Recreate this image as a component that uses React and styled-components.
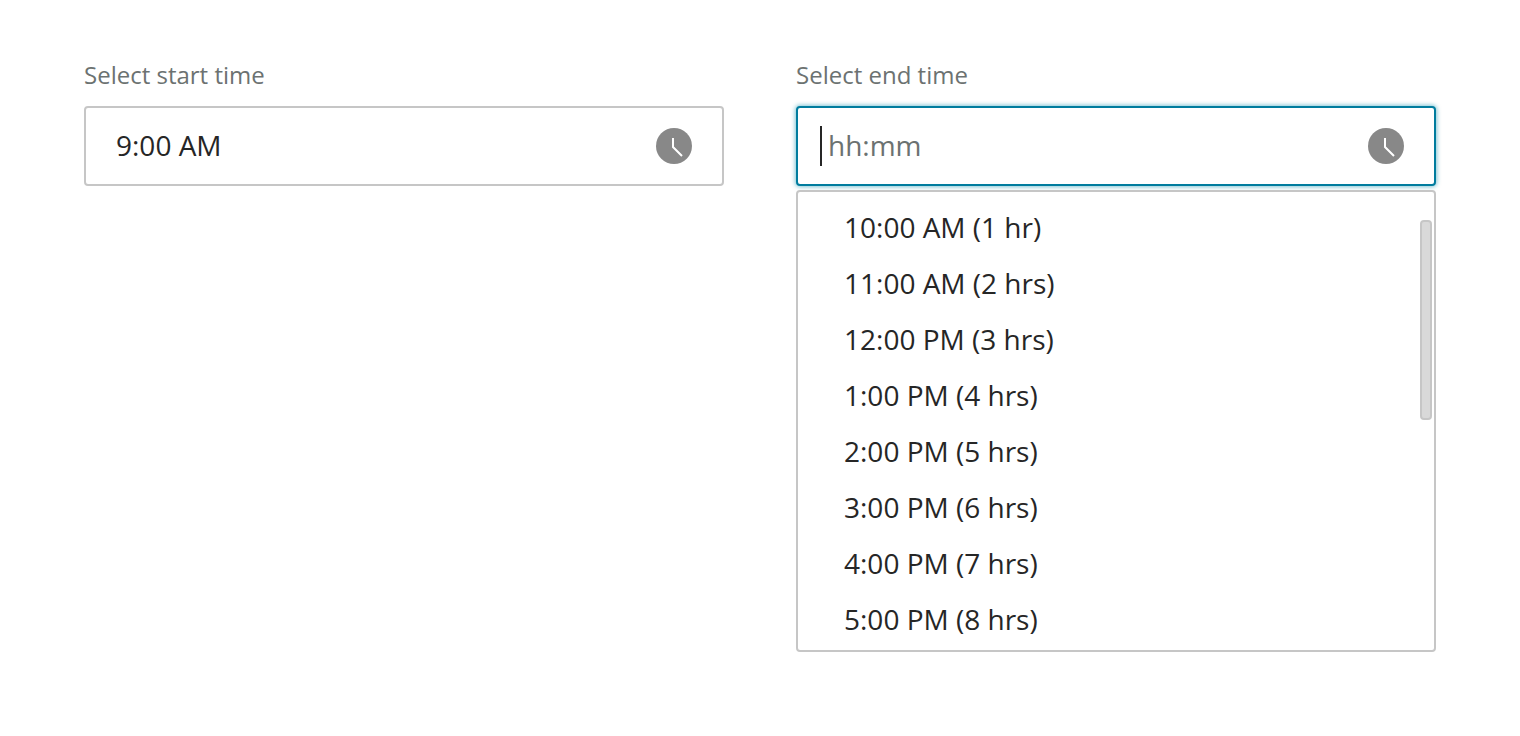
import React, { useState } from "react";
import styled, { createGlobalStyle } from "styled-components";

const GlobalStyle = createGlobalStyle`
  *, *::before, *::after { box-sizing: border-box; }
  body {
    margin: 0;
    background: #fff;
    color: #262626;
    font-family: "Open Sans", "Noto Sans", sans-serif;
    font-size: 28px;
    line-height: 38px;
  }
`;

const Page = styled.main`
  display: grid;
  grid-template-columns: repeat(2, minmax(0, 1fr));
  align-items: start;
  gap: 72px;
  padding: 60px 84px;
`;

const Field = styled.div`
  display: flex;
  flex-direction: column;
`;

const Label = styled.label`
  margin-bottom: 16px;
  color: #6c7271;
  font-size: 24px;
  line-height: 30px;
`;

const InputBox = styled.div`
  display: flex;
  align-items: center;
  height: 80px;
  padding: 0 30px 0 ${(p) => (p.$active ? 22 : 30)}px;
  border: 2px solid ${(p) => (p.$active ? "#007c9e" : "#c6c6c6")};
  border-radius: 4px;
  background: #fff;
  box-shadow: ${(p) => (p.$active ? "0 0 4px 1px rgba(0, 140, 170, 0.5)" : "none")};
`;

const Caret = styled.span`
  flex: none;
  width: 2px;
  height: 40px;
  margin-right: 6px;
  background: #262626;
`;

const TimeInput = styled.input`
  flex: 1;
  min-width: 0;
  height: 40px;
  padding: 0 0 2px;
  border: 0;
  outline: 0;
  background: transparent;
  color: inherit;
  font: inherit;
  caret-color: transparent;

  &::placeholder {
    color: #6c7271;
    opacity: 1;
  }
`;

const ClockSvg = styled.svg`
  flex: none;
  display: block;
  width: 36px;
  height: 36px;
`;

const Menu = styled.div`
  display: flex;
  align-items: flex-start;
  margin-top: 4px;
  padding: 8px 2px 2px 0;
  border: 2px solid #c6c6c6;
  border-radius: 4px;
  background: #fff;
`;

const OptionList = styled.ul`
  flex: 1;
  min-width: 0;
  margin: 0;
  padding: 0;
  list-style: none;
`;

const Option = styled.button`
  display: block;
  width: 100%;
  height: 56px;
  padding: 0 46px 2px;
  border: 0;
  background: transparent;
  color: inherit;
  font: inherit;
  text-align: left;
  cursor: pointer;
`;

const ScrollThumb = styled.span`
  flex: none;
  width: 12px;
  height: 200px;
  margin-top: 20px;
  border: 2px solid #c6c6c6;
  border-radius: 4px;
  background: #d9d9d9;
`;

function ClockIcon() {
  return (
    <ClockSvg viewBox="0 0 36 36" aria-hidden="true">
      <circle cx="18" cy="18" r="18" fill="#888" />
      <path d="M17 10v9l9 9" fill="none" stroke="#fff" strokeWidth="2" />
    </ClockSvg>
  );
}

const times = [
  "10:00 AM (1 hr)",
  "11:00 AM (2 hrs)",
  "12:00 PM (3 hrs)",
  "1:00 PM (4 hrs)",
  "2:00 PM (5 hrs)",
  "3:00 PM (6 hrs)",
  "4:00 PM (7 hrs)",
  "5:00 PM (8 hrs)",
];

export default function App() {
  const [start, setStart] = useState("9:00 AM");
  const [end, setEnd] = useState("");

  return (
    <>
      <GlobalStyle />
      <Page>
        <Field>
          <Label htmlFor="start-time">Select start time</Label>
          <InputBox>
            <TimeInput
              id="start-time"
              type="text"
              placeholder="hh:mm"
              value={start}
              onChange={(e) => setStart(e.target.value)}
            />
            <ClockIcon />
          </InputBox>
        </Field>
        <Field>
          <Label htmlFor="end-time">Select end time</Label>
          <InputBox $active>
            {end === "" && <Caret />}
            <TimeInput
              id="end-time"
              type="text"
              placeholder="hh:mm"
              value={end}
              onChange={(e) => setEnd(e.target.value)}
            />
            <ClockIcon />
          </InputBox>
          <Menu>
            <OptionList aria-label="End time options">
              {times.map((time) => (
                <li key={time}>
                  <Option type="button" onClick={() => setEnd(time.split(" (")[0])}>
                    {time}
                  </Option>
                </li>
              ))}
            </OptionList>
            <ScrollThumb />
          </Menu>
        </Field>
      </Page>
    </>
  );
}
